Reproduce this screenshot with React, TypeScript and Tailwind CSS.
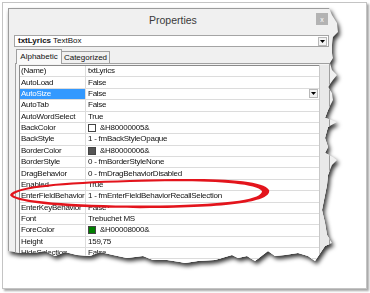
import React from 'react';

type Row = { name: string; value: string; swatch?: string; selected?: boolean };

const rows: Row[] = [
  { name: '(Name)', value: 'txtLyrics' },
  { name: 'AutoLoad', value: 'False' },
  { name: 'AutoSize', value: 'False', selected: true },
  { name: 'AutoTab', value: 'False' },
  { name: 'AutoWordSelect', value: 'True' },
  { name: 'BackColor', value: '&H80000005&', swatch: 'bg-white' },
  { name: 'BackStyle', value: '1 - fmBackStyleOpaque' },
  { name: 'BorderColor', value: '&H80000006&', swatch: 'bg-[#555555]' },
  { name: 'BorderStyle', value: '0 - fmBorderStyleNone' },
  { name: 'DragBehavior', value: '0 - fmDragBehaviorDisabled' },
  { name: 'Enabled', value: 'True' },
  { name: 'EnterFieldBehavior', value: '1 - fmEnterFieldBehaviorRecallSelection' },
  { name: 'EnterKeyBehavior', value: 'False' },
  { name: 'Font', value: 'Trebuchet MS' },
  { name: 'ForeColor', value: '&H00008000&', swatch: 'bg-[#008000]' },
  { name: 'Height', value: '159,75' },
  { name: 'HideSelection', value: 'False' },
];

// torn edge of the screenshot, page coordinates
const torn: [number, number][] = [
  [8, 8], [329, 8], [332, 15], [337, 23], [338, 32], [333, 37], [332, 45], [332, 53], [333, 58],
  [330, 63], [332, 70], [337, 75], [333, 80], [328, 87], [332, 93], [333, 100], [328, 110],
  [325, 118], [332, 120], [337, 122], [328, 127], [325, 138], [328, 147], [325, 153], [333, 157],
  [337, 160], [332, 165], [328, 175], [327, 185], [325, 195], [322, 210], [325, 223], [327, 235],
  [332, 243], [325, 246], [315, 261], [308, 256], [298, 253], [285, 255], [275, 256], [268, 251],
  [255, 261], [247, 256], [238, 258], [232, 255], [215, 260], [198, 261], [185, 263], [180, 262],
  [167, 260], [153, 260], [143, 256], [127, 258], [113, 255], [100, 252], [90, 256], [77, 255],
  [65, 252], [55, 256], [45, 251], [33, 253], [20, 253], [8, 251],
];

const Arrow = () => (
  <svg width="5" height="3" viewBox="0 0 5 3">
    <path d="M0 0H5L2.5 3Z" fill="#000" />
  </svg>
);

const DropButton = () => (
  <div className="w-[9px] h-[9px] border border-[#b8b8b8] bg-[#f3f3f3] flex items-center justify-center">
    <Arrow />
  </div>
);

export default function App() {
  const clip = `polygon(${torn.map(([x, y]) => `${x - 8}px ${y - 8}px`).join(',')})`;

  return (
    <div className="relative w-[370px] h-[293px] bg-white overflow-hidden font-['Liberation_Sans',Arial,sans-serif]">
      <div className="mt-[2px] ml-[2px] w-[365px] h-[287px] border border-[#c4c4c4] bg-white shadow-[2px_2px_2px_rgba(0,0,0,0.35)] pt-[5px] pl-[5px]">
        <div className="w-[332px] h-[258px] drop-shadow-[2px_3px_2px_rgba(0,0,0,0.8)]">
          <div className="w-[332px] h-[258px] bg-[#f0f0f0] border-l border-t border-[#9c9c9c] flex flex-col" style={{ clipPath: clip }}>
            {/* title bar */}
            <div className="h-[26px] flex items-start">
              <span className="ml-[140px] mt-[5px] text-[10.5px] leading-[12px] text-[#3a3a3a]">Properties</span>
              <div className="ml-auto mt-[4px] mr-[12px] w-[12px] h-[12px] bg-[#b3b3b3] flex items-center justify-center text-[7px] leading-[7px] text-white">x</div>
            </div>

            {/* object combo */}
            <div className="ml-[5px] w-[315px] h-[12px] border border-[#a4a4a4] bg-white flex items-center text-[8px] leading-[10px] text-[#111]">
              <span className="ml-[3px] font-bold">txtLyrics</span>
              <span className="ml-[2px]">TextBox</span>
              <div className="ml-auto mr-[1px]">
                <DropButton />
              </div>
            </div>

            {/* tabs */}
            <div className="mt-[2px] ml-[7px] flex items-end h-[14px] text-[8px] leading-[10px] text-[#111]">
              <div className="relative z-10 -mb-px h-[15px] w-[46px] border border-b-0 border-[#a0a0a0] bg-[#f9f9f9] flex items-center justify-center">Alphabetic</div>
              <div className="h-[12px] w-[48px] border border-b-0 border-l-0 border-[#a0a0a0] bg-[#f0f0f0] flex items-center justify-center">Categorized</div>
            </div>

            {/* tab page */}
            <div className="ml-[6px] w-[315px] flex-1 border border-[#a0a0a0] bg-[#f3f3f3] flex pl-[3px] pt-[1px]">
              <div className="w-[308px] border-l border-t border-[#8a8a8a] bg-white text-[8px] leading-[10px] tracking-[-0.25px] text-[#111]">
                {rows.map((r) => (
                  <div key={r.name} className="flex h-[11.375px] border-b border-[#dcdcdc]">
                    <div className={`w-[66px] shrink-0 border-r border-[#dcdcdc] pl-[1px] flex items-center whitespace-nowrap overflow-hidden ${r.selected ? 'bg-[#3399ff] text-white' : ''}`}>
                      {r.name}
                    </div>
                    <div className="flex-1 pl-[2px] flex items-center whitespace-nowrap">
                      {r.swatch && <div className={`w-[8px] h-[8px] border border-[#444] mr-[4px] ${r.swatch}`} />}
                      <span>{r.value}</span>
                      {r.selected && (
                        <div className="ml-auto mr-[1px]">
                          <DropButton />
                        </div>
                      )}
                    </div>
                  </div>
                ))}
              </div>
              <div className="w-[10px] border-l border-[#c8c8c8] bg-[#e9e9e9]" />
            </div>
          </div>
        </div>
      </div>

      {/* red annotation ellipse */}
      <svg className="absolute left-0 top-0 pointer-events-none" width="370" height="293" viewBox="0 0 370 293">
        <path
          fillRule="evenodd"
          fill="#e3141c"
          d="M10 195 C14 186 60 182 130 180 C200 178 262 178 269 190 C272 200 240 207 160 208 C80 209 14 204 10 195 Z M13 195 C20 188 60 184 130 182 C200 180 255 182 262 191 C262 199 235 204 160 205.5 C80 206.5 18 201 13 195 Z"
        />
      </svg>
    </div>
  );
}
